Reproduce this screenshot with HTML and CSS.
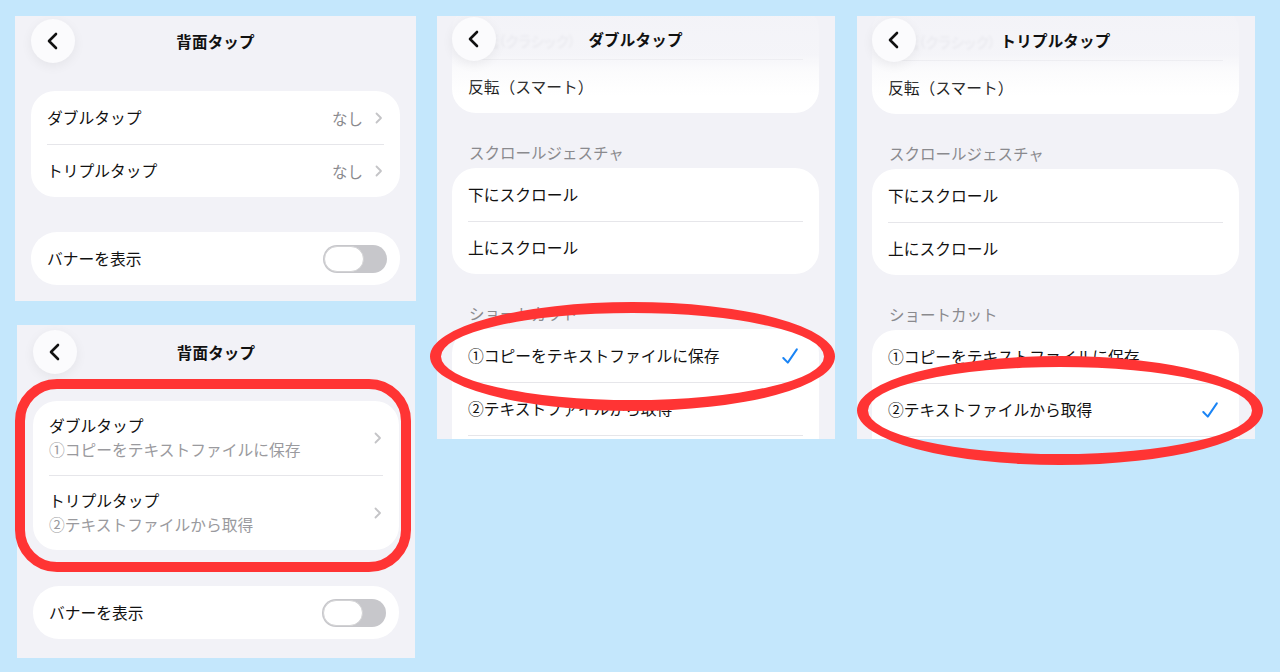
FILE: index.html
```html
<!DOCTYPE html>
<html lang="ja">
<head>
<meta charset="utf-8">
<title>背面タップ</title>
<link rel="stylesheet" href="styles.css">
</head>
<body>
<main class="canvas">
  <div class="col-left">
    <section class="shot shot-1">
      <div class="screen">
        <header class="nav">
          <div class="back"><svg viewBox="0 0 12 18" width="12" height="18"><path d="M10 2 L3 9 L10 16" fill="none" stroke="#111" stroke-width="2.6" stroke-linecap="round" stroke-linejoin="round"/></svg></div>
          <div class="nav-title">背面タップ</div>
          <div></div>
        </header>
        <div class="card card-top-1">
          <div class="row"><span class="label">ダブルタップ</span><span class="value">なし<svg class="chev" viewBox="0 0 8 12" width="8" height="12"><path d="M1.5 1.5 L6 6 L1.5 10.5" fill="none" stroke="#c4c4c7" stroke-width="1.8" stroke-linecap="round" stroke-linejoin="round"/></svg></span></div>
          <div class="row"><span class="label">トリプルタップ</span><span class="value">なし<svg class="chev" viewBox="0 0 8 12" width="8" height="12"><path d="M1.5 1.5 L6 6 L1.5 10.5" fill="none" stroke="#c4c4c7" stroke-width="1.8" stroke-linecap="round" stroke-linejoin="round"/></svg></span></div>
        </div>
        <div class="card card-banner-1">
          <div class="row"><span class="label">バナーを表示</span><span class="toggle"><span class="knob"></span></span></div>
        </div>
      </div>
    </section>
    <section class="shot shot-2">
      <div class="screen">
        <header class="nav nav-2">
          <div class="back"><svg viewBox="0 0 12 18" width="12" height="18"><path d="M10 2 L3 9 L10 16" fill="none" stroke="#111" stroke-width="2.6" stroke-linecap="round" stroke-linejoin="round"/></svg></div>
          <div class="nav-title">背面タップ</div>
          <div></div>
        </header>
        <div class="card card-top-2">
          <div class="row row-tall"><div class="two-line"><span class="label">ダブルタップ</span><span class="sub">①コピーをテキストファイルに保存</span></div><svg class="chev" viewBox="0 0 8 12" width="8" height="12"><path d="M1.5 1.5 L6 6 L1.5 10.5" fill="none" stroke="#c4c4c7" stroke-width="1.8" stroke-linecap="round" stroke-linejoin="round"/></svg></div>
          <div class="row row-tall"><div class="two-line"><span class="label">トリプルタップ</span><span class="sub">②テキストファイルから取得</span></div><svg class="chev" viewBox="0 0 8 12" width="8" height="12"><path d="M1.5 1.5 L6 6 L1.5 10.5" fill="none" stroke="#c4c4c7" stroke-width="1.8" stroke-linecap="round" stroke-linejoin="round"/></svg></div>
        </div>
        <div class="card card-banner-2">
          <div class="row"><span class="label">バナーを表示</span><span class="toggle"><span class="knob"></span></span></div>
        </div>
      </div>
      <div class="mark-rect"></div>
    </section>
  </div>

  <section class="shot shot-3">
    <div class="screen screen-list">
      <div class="card card-scrolled">
        <div class="row row-faded"><span class="label faded">反転（クラシック）</span></div>
        <div class="row row-54"><span class="label">反転（スマート）</span></div>
      </div>
      <div class="section-title">スクロールジェスチャ</div>
      <div class="card">
        <div class="row"><span class="label">下にスクロール</span></div>
        <div class="row"><span class="label">上にスクロール</span></div>
      </div>
      <div class="section-title">ショートカット</div>
      <div class="card">
        <div class="row"><span class="label">①コピーをテキストファイルに保存</span><svg class="check" viewBox="0 0 16 16" width="16" height="16"><path d="M1.3 10 L5.8 14.6 L14.8 1.4" fill="none" stroke="#1a84f5" stroke-width="2" stroke-linecap="round" stroke-linejoin="round"/></svg></div>
        <div class="row"><span class="label">②テキストファイルから取得</span></div>
        <div class="row"><span class="label"></span></div>
      </div>
      <div class="fade"></div>
      <header class="nav nav-over">
        <div class="back"><svg viewBox="0 0 12 18" width="12" height="18"><path d="M10 2 L3 9 L10 16" fill="none" stroke="#111" stroke-width="2.6" stroke-linecap="round" stroke-linejoin="round"/></svg></div>
        <div class="nav-title">ダブルタップ</div>
        <div></div>
      </header>
    </div>
    <div class="mark-ellipse ellipse-3"></div>
  </section>

  <section class="shot shot-4">
    <div class="screen screen-list screen-list-4">
      <div class="card card-scrolled">
        <div class="row row-faded"><span class="label faded">反転（クラシック）</span></div>
        <div class="row row-54"><span class="label">反転（スマート）</span></div>
      </div>
      <div class="section-title">スクロールジェスチャ</div>
      <div class="card">
        <div class="row"><span class="label">下にスクロール</span></div>
        <div class="row"><span class="label">上にスクロール</span></div>
      </div>
      <div class="section-title">ショートカット</div>
      <div class="card">
        <div class="row"><span class="label">①コピーをテキストファイルに保存</span></div>
        <div class="row"><span class="label">②テキストファイルから取得</span><svg class="check" viewBox="0 0 16 16" width="16" height="16"><path d="M1.3 10 L5.8 14.6 L14.8 1.4" fill="none" stroke="#1a84f5" stroke-width="2" stroke-linecap="round" stroke-linejoin="round"/></svg></div>
        <div class="row"><span class="label"></span></div>
      </div>
      <div class="fade"></div>
      <header class="nav nav-over nav-over-4">
        <div class="back"><svg viewBox="0 0 12 18" width="12" height="18"><path d="M10 2 L3 9 L10 16" fill="none" stroke="#111" stroke-width="2.6" stroke-linecap="round" stroke-linejoin="round"/></svg></div>
        <div class="nav-title">トリプルタップ</div>
        <div></div>
      </header>
    </div>
    <div class="mark-ellipse ellipse-4"></div>
  </section>
</main>
</body>
</html>
```

FILE: styles.css
```css
* { box-sizing: border-box; }

html, body {
  margin: 0;
  height: 100%;
}

body {
  background: #c4e7fc;
  font-family: "Noto Sans CJK JP", "Noto Sans", sans-serif;
  color: #111;
  overflow: hidden;
}

.canvas {
  display: flex;
  align-items: flex-start;
  padding: 16px 0 0 15px;
}

.col-left {
  display: flex;
  flex-direction: column;
  width: 401px;
}

.shot {
  position: relative;
  flex: none;
}

.screen {
  position: relative;
  width: 100%;
  height: 100%;
  background: #f2f2f7;
  overflow: hidden;
}

.shot-1 { width: 401px; height: 285px; }
.shot-2 { width: 398px; height: 333px; margin: 24px 0 0 2px; }
.shot-3 { width: 398px; height: 423px; margin-left: 21px; }
.shot-4 { width: 398px; height: 423px; margin-left: 22px; }

/* nav bar */
.nav {
  display: grid;
  grid-template-columns: 44px 1fr 44px;
  align-items: center;
  padding: 3px 16px 0;
}
.nav-2 { padding-top: 5px; }

.back {
  width: 44px;
  height: 44px;
  border-radius: 50%;
  background: #fbfbfd;
  box-shadow: 0 3px 12px rgba(0, 0, 0, 0.06);
  display: flex;
  align-items: center;
  justify-content: center;
  padding-right: 2px;
}

.nav-title {
  text-align: center;
  font-size: 15.5px;
  font-weight: 700;
  line-height: 22px;
  letter-spacing: 0.2px;
}

.nav-over {
  position: absolute;
  top: 1px;
  left: 0;
  right: 0;
  padding: 0 16px 0 15px;
  z-index: 3;
}
.nav-over-4 { top: 2px; }

/* cards */
.card {
  background: #fff;
  border-radius: 24px;
  padding: 0 16px;
  margin: 0 16px;
}

.card-top-1 { margin-top: 28px; }
.card-banner-1 { margin-top: 35px; border-radius: 26px; }
.card-top-2 { margin-top: 27px; }
.card-banner-2 { margin-top: 36px; border-radius: 26px; }

.row {
  display: flex;
  align-items: center;
  justify-content: space-between;
  height: 53px;
}
.row + .row { border-top: 1px solid #e6e6ea; }

.row-tall { height: 74px; }
.card-top-2 .row + .row { height: 75px; }

.label {
  font-size: 15.75px;
  line-height: 24px;
  color: #111;
}

.value {
  display: flex;
  align-items: center;
  gap: 12px;
  font-size: 15.5px;
  color: #8a8a8e;
  padding-right: 1px;
}

.chev { display: block; flex: none; }
.row-tall .chev { margin-right: 1px; }

.two-line {
  display: flex;
  flex-direction: column;
}
.sub {
  font-size: 15.75px;
  line-height: 24px;
  color: #9a9a9e;
}

/* toggle */
.toggle {
  width: 64px;
  height: 28px;
  border-radius: 14px;
  background: #c7c7cb;
  padding: 1px;
  margin-right: -3px;
  display: flex;
}
.knob {
  width: 40px;
  height: 26px;
  border-radius: 13px;
  background: #fff;
  border: 1px solid #d2d2d4;
}

/* list screens */
.screen-list { padding-top: 0; }
.screen-list .card { margin: 0 16px 0 15px; }
.screen-list-4 { padding-top: 1px; }

.card-scrolled { margin-top: -10px !important; }
.row-faded {
  align-items: flex-end;
  padding-bottom: 6px;
}
.faded {
  color: #cdcdd2;
  font-weight: 700;
  filter: blur(1.2px);
  font-size: 14.5px;
  font-feature-settings: "palt";
  letter-spacing: -0.3px;
  padding-left: 2px;
}
.row-54 { height: 54px; }

.section-title {
  font-size: 15.5px;
  line-height: 22px;
  color: #8a8a8e;
  padding-left: 32px;
  margin: 28px 0 5px;
}

.check {
  display: block;
  flex: none;
  margin-right: 5px;
}

.fade {
  position: absolute;
  top: 0;
  left: 0;
  right: 0;
  height: 80px;
  background: linear-gradient(to bottom,
    rgba(242, 242, 247, 0.9) 0,
    rgba(242, 242, 247, 0.8) 38px,
    rgba(242, 242, 247, 0.3) 55px,
    rgba(242, 242, 247, 0) 80px);
  z-index: 2;
}

/* red annotations */
.mark-rect {
  position: absolute;
  left: -2px;
  top: 54px;
  width: 396px;
  height: 193px;
  border: 10px solid #ff3434;
  border-radius: 42px;
  z-index: 5;
}

.mark-ellipse {
  position: absolute;
  border: 11px solid #ff3434;
  border-radius: 50%;
  z-index: 5;
}
.ellipse-3 {
  left: -7px;
  top: 286px;
  width: 405px;
  height: 109px;
}
.ellipse-4 {
  left: 0;
  top: 340px;
  width: 406px;
  height: 109px;
}
```
